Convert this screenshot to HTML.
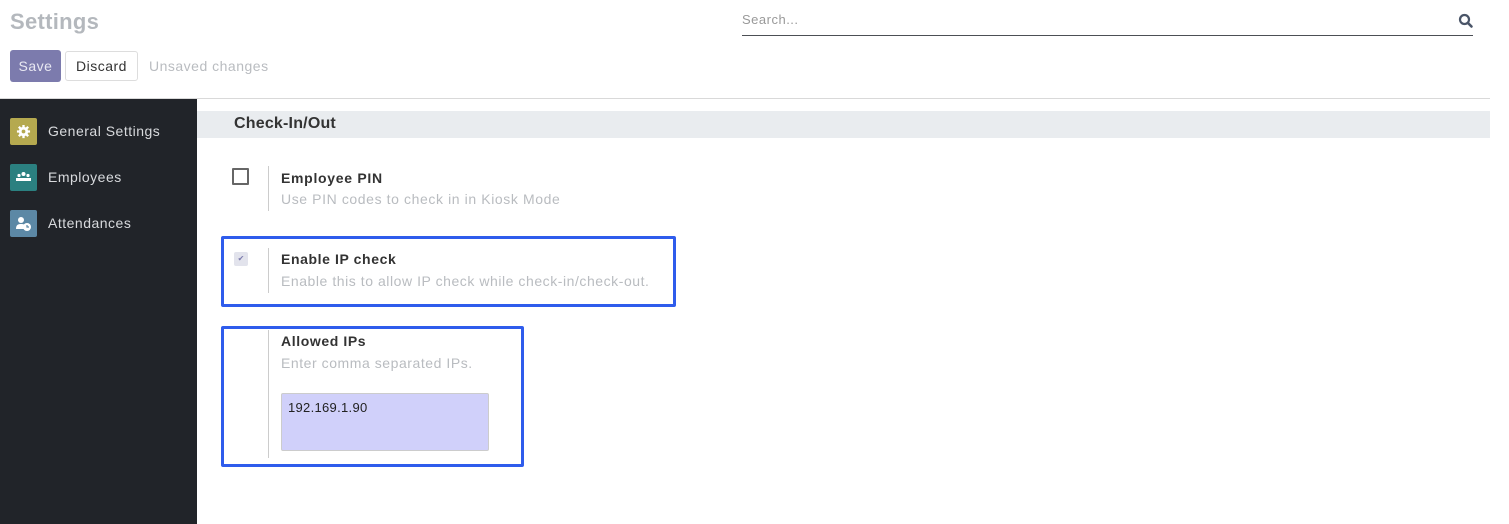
<!DOCTYPE html>
<html><head><style>
*{margin:0;padding:0;box-sizing:border-box}
body{width:1509px;height:524px;background:#fff;font-family:"Liberation Sans",sans-serif;font-size:13px;color:#4c4c4c;position:relative;overflow:hidden;letter-spacing:0.5px}
.a{position:absolute}
</style></head><body>
<div class="a" style="left:10px;top:9px;font-size:22px;color:#b4b8bd;font-weight:bold;letter-spacing:0.3px">Settings</div>
<div class="a" style="left:742px;top:12px;font-size:13px;color:#999">Search...</div>
<div class="a" style="left:742px;top:35px;width:731px;height:1px;background:#4c4f55"></div>
<svg class="a" style="left:1458px;top:13px" width="16" height="16" viewBox="0 0 16 16"><circle cx="6.5" cy="6.5" r="4.5" fill="none" stroke="#4a5568" stroke-width="2.2"/><path d="M10 10l3.5 3.5" stroke="#4a5568" stroke-width="2.6" stroke-linecap="round"/></svg>
<div class="a" style="left:10px;top:50px;width:51px;height:32px;background:#7c7bad;border-radius:3px;color:#e8e8f2;font-size:14px;line-height:32px;text-align:center">Save</div>
<div class="a" style="left:65px;top:51px;width:73px;height:30px;border:1px solid #ddd;border-radius:3px;color:#333;font-size:14px;line-height:28px;text-align:center">Discard</div>
<div class="a" style="left:149px;top:58px;font-size:14px;color:#b9bcc0">Unsaved changes</div>
<div class="a" style="left:0;top:98px;width:1490px;height:1px;background:#d9d9d9"></div>
<div class="a" style="left:0;top:99px;width:197px;height:425px;background:#212429"></div>
<div class="a" style="left:10px;top:118px;width:27px;height:27px;background:#b5a94f;border-radius:2px"></div>
<svg class="a" style="left:16px;top:124px" width="15" height="15" viewBox="0 0 16 16"><circle cx="8" cy="8" r="5" fill="#fff"/><g stroke="#fff" stroke-width="2.5"><path d="M8 1v14M1 8h14M3 3l10 10M13 3L3 13"/></g><circle cx="8" cy="8" r="2" fill="#b5a94f"/></svg>
<div class="a" style="left:10px;top:164px;width:27px;height:27px;background:#2b8080;border-radius:2px"></div>
<svg class="a" style="left:15px;top:171px" width="17" height="12" viewBox="0 0 17 12"><circle cx="8.5" cy="3" r="2" fill="#fff"/><circle cx="4" cy="4.5" r="1.6" fill="#fff"/><circle cx="13" cy="4.5" r="1.6" fill="#fff"/><rect x="1" y="7" width="15" height="3" fill="#fff"/></svg>
<div class="a" style="left:10px;top:210px;width:27px;height:27px;background:#5c88a5;border-radius:2px"></div>
<svg class="a" style="left:14px;top:215px" width="20" height="18" viewBox="0 0 20 18"><circle cx="7" cy="5" r="3" fill="#fff"/><path d="M2 14c0-4 2-5 5-5s4 1 5 2v3z" fill="#fff"/><circle cx="13" cy="12" r="4" fill="#fff"/><path d="M13 10v2h2" stroke="#5c88a5" stroke-width="1.2" fill="none"/></svg>
<div class="a" style="left:48px;top:123px;font-size:14px;color:#d8dadd">General Settings</div>
<div class="a" style="left:48px;top:169px;font-size:14px;color:#d8dadd">Employees</div>
<div class="a" style="left:48px;top:215px;font-size:14px;color:#d8dadd">Attendances</div>
<div class="a" style="left:197px;top:111px;width:1293px;height:27px;background:#e9ecef"></div>
<div class="a" style="left:234px;top:115px;font-size:16px;font-weight:bold;color:#333;letter-spacing:0.2px">Check-In/Out</div>
<div class="a" style="left:232px;top:168px;width:17px;height:17px;border:2px solid #666;border-radius:1px"></div>
<div class="a" style="left:268px;top:166px;width:1px;height:45px;background:#ccc"></div>
<div class="a" style="left:281px;top:170px;font-size:14px;font-weight:bold;color:#333;letter-spacing:0.7px">Employee PIN</div>
<div class="a" style="left:281px;top:191px;font-size:14px;color:#b9bcc0;letter-spacing:0.6px">Use PIN codes to check in in Kiosk Mode</div>
<div class="a" style="left:221px;top:236px;width:455px;height:71px;border:3px solid #2f5cec;border-radius:2px"></div>
<div class="a" style="left:234px;top:252px;width:14px;height:14px;background:#e2e3ec;border-radius:2px;color:#7c7bad;font-size:8px;line-height:14px;text-align:center;letter-spacing:0">✔</div>
<div class="a" style="left:268px;top:248px;width:1px;height:45px;background:#ccc"></div>
<div class="a" style="left:281px;top:251px;font-size:14px;font-weight:bold;color:#333;letter-spacing:0.6px">Enable IP check</div>
<div class="a" style="left:281px;top:273px;font-size:14px;color:#b9bcc0;letter-spacing:0.55px">Enable this to allow IP check while check-in/check-out.</div>
<div class="a" style="left:221px;top:326px;width:303px;height:141px;border:3px solid #2f5cec;border-radius:2px"></div>
<div class="a" style="left:268px;top:330px;width:1px;height:128px;background:#ccc"></div>
<div class="a" style="left:281px;top:333px;font-size:14px;font-weight:bold;color:#333;letter-spacing:0.6px">Allowed IPs</div>
<div class="a" style="left:281px;top:355px;font-size:14px;color:#b9bcc0;letter-spacing:0.55px">Enter comma separated IPs.</div>
<div class="a" style="left:281px;top:393px;width:208px;height:58px;background:#d0d0fa;border:1px solid #ccc;border-radius:2px;padding:6px;font-size:13px;color:#222;letter-spacing:0.3px">192.169.1.90</div>
</body></html>
